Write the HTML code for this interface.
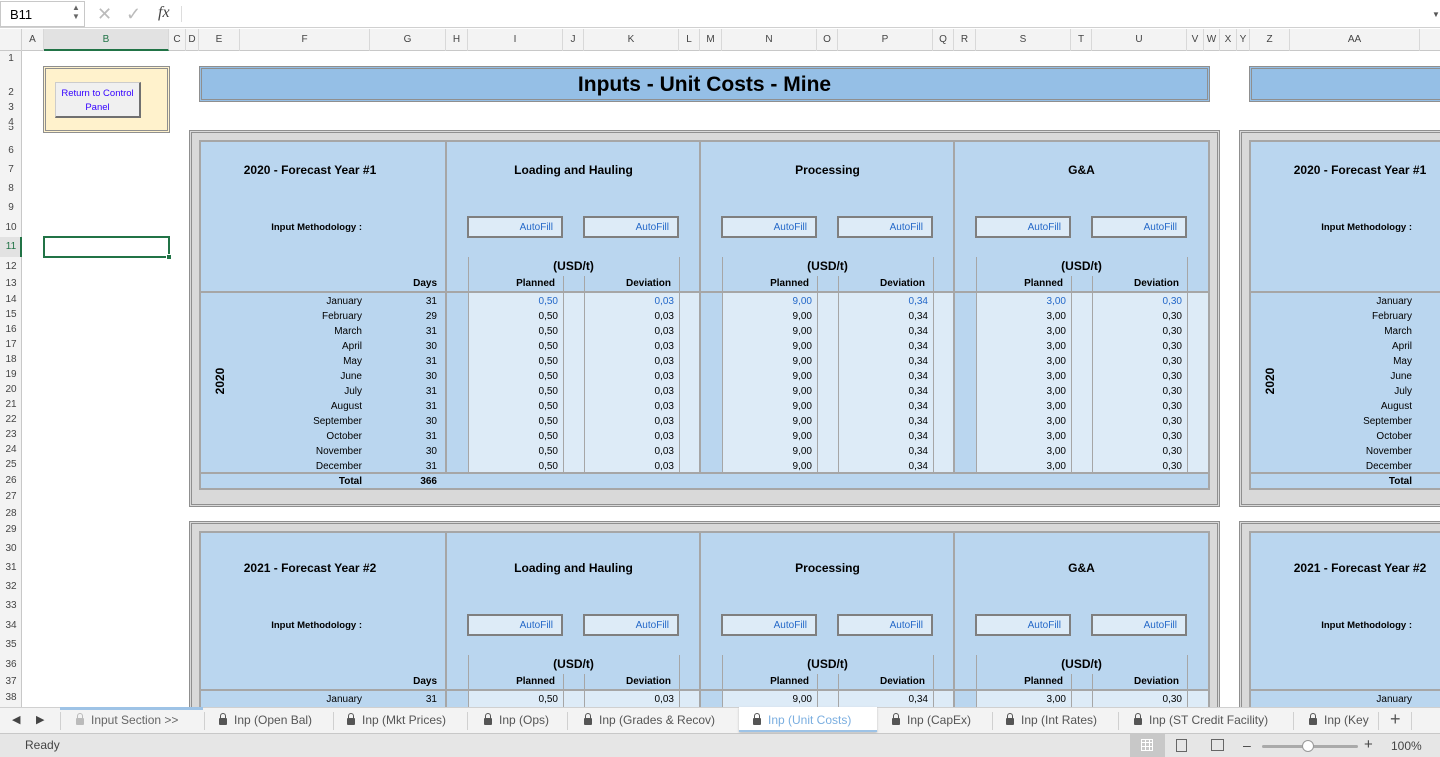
<!DOCTYPE html>
<html><head><meta charset="utf-8"><style>
*{margin:0;padding:0;box-sizing:border-box}
html{width:1440px;height:757px;overflow:hidden}
body{width:1440px;height:757px;overflow:hidden;background:#fff;font-family:"Liberation Sans",Arial,sans-serif;position:relative;color:#000}
.a{position:absolute}
.r{text-align:right}
.c{text-align:center}
.b{font-weight:bold}
.ch{position:absolute;top:29px;height:22px;line-height:22px;font-size:10px;color:#444;text-align:center;border-right:1px solid #d8d8d8}
.rh{position:absolute;left:0;width:22px;font-size:10px;color:#444;text-align:center;height:14px;line-height:14px}
.sec{position:absolute;left:0;width:1440px;height:510px;overflow:hidden}
.og{position:absolute;background:#d9d9d9;border:3px double #8f8f8f}
.ib{position:absolute;background:#bad6ef;border:2px solid #a6a6a6}
.vl{position:absolute;width:2px;background:#a6a6a6}
.hl{position:absolute;height:2px;background:#a6a6a6}
.tl{position:absolute;width:1px;background:#a6a6a6}
.lf{position:absolute;background:#ddebf7}
.af{position:absolute;width:96px;height:22px;border:2px solid #7f7f7f;background:#ddebf7;color:#2468c8;font-size:10px;line-height:20px;text-align:right;padding-right:8px}
.h1{position:absolute;font-size:12px;font-weight:bold;text-align:center;height:16px;line-height:16px}
.col{position:absolute;font-size:10px;line-height:15px;text-align:right}
.sm{position:absolute;font-size:10px;font-weight:bold;text-align:right;line-height:14px}
.tab{position:absolute;top:711px;font-size:12px;color:#555;height:18px;line-height:18px;white-space:nowrap}
.sep{position:absolute;top:712px;width:1px;height:18px;background:#d0d0d0}
.lk{display:inline-block;width:8px;height:7px;background:#555;border-radius:1px;margin-right:7px;position:relative;vertical-align:-1px}
.lk:before{content:"";position:absolute;left:1px;top:-5px;width:4px;height:5px;border:1.5px solid #555;border-bottom:none;border-radius:3px 3px 0 0}
</style></head><body>

<div class="a" style="left:0;top:0;width:1440px;height:28px;background:#fff;border-bottom:1px solid #d0d0d0"></div>
<div class="a" style="left:0;top:1px;width:85px;height:26px;border:1px solid #c8c8c8;background:#fff"></div>
<div class="a" style="left:10px;top:7px;font-size:13px">B11</div>
<div class="a" style="left:72px;top:3px;font-size:8px;color:#666;line-height:9px">▲<br>▼</div>
<div class="a" style="left:97px;top:4px;font-size:18px;color:#bbb">✕</div>
<div class="a" style="left:126px;top:4px;font-size:18px;color:#bbb">✓</div>
<div class="a" style="left:158px;top:4px;font-size:16px;font-style:italic;font-family:'Liberation Serif',serif;color:#444">fx</div>
<div class="a" style="left:181px;top:6px;width:1px;height:16px;background:#ddd"></div>
<div class="a" style="left:1432px;top:10px;font-size:8px;color:#555">▼</div>

<div class="a" style="left:0;top:29px;width:1440px;height:22px;background:#f3f3f3;border-bottom:1px solid #c8c8c8"></div>
<div class="a" style="left:0;top:29px;width:22px;height:22px;border-right:1px solid #d0d0d0"></div>
<div class="ch" style="left:22px;width:22px">A</div>
<div class="ch" style="left:44px;width:125px;background:#e2e2e2;border-bottom:2px solid #217346;color:#217346">B</div>
<div class="ch" style="left:169px;width:17px">C</div>
<div class="ch" style="left:186px;width:13px">D</div>
<div class="ch" style="left:199px;width:41px">E</div>
<div class="ch" style="left:240px;width:130px">F</div>
<div class="ch" style="left:370px;width:76px">G</div>
<div class="ch" style="left:446px;width:22px">H</div>
<div class="ch" style="left:468px;width:95px">I</div>
<div class="ch" style="left:563px;width:21px">J</div>
<div class="ch" style="left:584px;width:95px">K</div>
<div class="ch" style="left:679px;width:21px">L</div>
<div class="ch" style="left:700px;width:22px">M</div>
<div class="ch" style="left:722px;width:95px">N</div>
<div class="ch" style="left:817px;width:21px">O</div>
<div class="ch" style="left:838px;width:95px">P</div>
<div class="ch" style="left:933px;width:21px">Q</div>
<div class="ch" style="left:954px;width:22px">R</div>
<div class="ch" style="left:976px;width:95px">S</div>
<div class="ch" style="left:1071px;width:21px">T</div>
<div class="ch" style="left:1092px;width:95px">U</div>
<div class="ch" style="left:1187px;width:17px">V</div>
<div class="ch" style="left:1204px;width:16px">W</div>
<div class="ch" style="left:1220px;width:17px">X</div>
<div class="ch" style="left:1237px;width:13px">Y</div>
<div class="ch" style="left:1250px;width:40px">Z</div>
<div class="ch" style="left:1290px;width:130px">AA</div>

<div class="a" style="left:0;top:51px;width:22px;height:656px;background:#f3f3f3;border-right:1px solid #c8c8c8"></div>
<div class="a" style="left:0;top:237px;width:22px;height:20px;background:#e2e2e2;border-right:2px solid #217346"></div>
<div class="rh" style="top:52px">1</div>
<div class="rh" style="top:86px">2</div>
<div class="rh" style="top:101px">3</div>
<div class="rh" style="top:116px">4</div>
<div class="rh" style="top:126px;height:8px;overflow:hidden;line-height:4px">5</div>
<div class="rh" style="top:144px">6</div>
<div class="rh" style="top:163px">7</div>
<div class="rh" style="top:182px">8</div>
<div class="rh" style="top:201px">9</div>
<div class="rh" style="top:221px">10</div>
<div class="rh" style="top:240px;color:#217346">11</div>
<div class="rh" style="top:260px">12</div>
<div class="rh" style="top:277px">13</div>
<div class="rh" style="top:293px">14</div>
<div class="rh" style="top:308px">15</div>
<div class="rh" style="top:323px">16</div>
<div class="rh" style="top:338px">17</div>
<div class="rh" style="top:353px">18</div>
<div class="rh" style="top:368px">19</div>
<div class="rh" style="top:383px">20</div>
<div class="rh" style="top:398px">21</div>
<div class="rh" style="top:413px">22</div>
<div class="rh" style="top:428px">23</div>
<div class="rh" style="top:443px">24</div>
<div class="rh" style="top:458px">25</div>
<div class="rh" style="top:474px">26</div>
<div class="rh" style="top:490px">27</div>
<div class="rh" style="top:507px">28</div>
<div class="rh" style="top:523px">29</div>
<div class="rh" style="top:542px">30</div>
<div class="rh" style="top:561px">31</div>
<div class="rh" style="top:580px">32</div>
<div class="rh" style="top:599px">33</div>
<div class="rh" style="top:619px">34</div>
<div class="rh" style="top:638px">35</div>
<div class="rh" style="top:658px">36</div>
<div class="rh" style="top:675px">37</div>
<div class="rh" style="top:691px">38</div>

<div class="a" style="left:23px;top:52px;width:1417px;height:655px;overflow:hidden">
<div class="a" style="left:-23px;top:-52px;width:1440px;height:707px;overflow:hidden">

<div class="a" style="left:43px;top:66px;width:127px;height:67px;background:#fff2cc;border:3px double #8f8f8f"></div>
<div class="a" style="left:55px;top:82px;width:86px;height:36px;background:#f0f0f0;border:1px solid #ccc;border-right:2px solid #707070;border-bottom:2px solid #707070;color:#3300ff;font-size:9.5px;text-align:center;line-height:14px;padding-top:4px">Return to Control<br>Panel</div>

<div class="a" style="left:43px;top:236px;width:127px;height:22px;border:2px solid #217346"></div>
<div class="a" style="left:166px;top:254px;width:6px;height:6px;background:#217346;border:1px solid #fff"></div>

<div class="a" style="left:199px;top:66px;width:1011px;height:36px;background:#95bfe6;border:3px double #8f8f8f"></div>
<div class="a c b" style="left:199px;top:72px;width:1011px;font-size:21px;line-height:26px">Inputs - Unit Costs - Mine</div>
<div class="a" style="left:1249px;top:66px;width:220px;height:36px;background:#95bfe6;border:3px double #8f8f8f"></div>

<div class="sec" style="top:0">
<div class="og" style="left:189px;top:130px;width:1031px;height:377px"></div>
<div class="ib" style="left:199px;top:140px;width:1011px;height:350px"></div>
<div class="lf" style="left:468px;top:293px;width:232px;height:180px"></div>
<div class="lf" style="left:722px;top:293px;width:232px;height:180px"></div>
<div class="lf" style="left:976px;top:293px;width:232px;height:180px"></div>
<div class="vl" style="left:445px;top:141px;height:332px"></div>
<div class="vl" style="left:699px;top:141px;height:332px"></div>
<div class="vl" style="left:953px;top:141px;height:332px"></div>
<div class="hl" style="left:200px;top:291px;width:1008px"></div>
<div class="hl" style="left:200px;top:472px;width:1008px"></div>
<div class="tl" style="left:468px;top:257px;height:215px"></div><div class="tl" style="left:679px;top:257px;height:215px"></div>
<div class="tl" style="left:563px;top:276px;height:196px"></div><div class="tl" style="left:584px;top:276px;height:196px"></div>
<div class="tl" style="left:722px;top:257px;height:215px"></div><div class="tl" style="left:933px;top:257px;height:215px"></div>
<div class="tl" style="left:817px;top:276px;height:196px"></div><div class="tl" style="left:838px;top:276px;height:196px"></div>
<div class="tl" style="left:976px;top:257px;height:215px"></div><div class="tl" style="left:1187px;top:257px;height:215px"></div>
<div class="tl" style="left:1071px;top:276px;height:196px"></div><div class="tl" style="left:1092px;top:276px;height:196px"></div>

<div class="h1" style="left:200px;top:162px;width:220px">2020 - Forecast Year #1</div>
<div class="h1" style="left:448px;top:162px;width:251px">Loading and Hauling</div>
<div class="h1" style="left:702px;top:162px;width:251px">Processing</div>
<div class="h1" style="left:956px;top:162px;width:251px">G&amp;A</div>
<div class="sm" style="left:200px;top:221px;width:162px;font-size:9.5px">Input Methodology :</div>
<div class="af" style="left:467px;top:216px">AutoFill</div><div class="af" style="left:583px;top:216px">AutoFill</div>
<div class="af" style="left:721px;top:216px">AutoFill</div><div class="af" style="left:837px;top:216px">AutoFill</div>
<div class="af" style="left:975px;top:216px">AutoFill</div><div class="af" style="left:1091px;top:216px">AutoFill</div>
<div class="h1" style="left:468px;top:258px;width:211px">(USD/t)</div>
<div class="h1" style="left:722px;top:258px;width:211px">(USD/t)</div>
<div class="h1" style="left:976px;top:258px;width:211px">(USD/t)</div>
<div class="sm" style="left:380px;top:277px;width:57px">Days</div>
<div class="sm" style="left:468px;top:277px;width:87px">Planned</div><div class="sm" style="left:584px;top:277px;width:87px">Deviation</div>
<div class="sm" style="left:722px;top:277px;width:87px">Planned</div><div class="sm" style="left:838px;top:277px;width:87px">Deviation</div>
<div class="sm" style="left:976px;top:277px;width:87px">Planned</div><div class="sm" style="left:1092px;top:277px;width:87px">Deviation</div>
<div class="a b" style="left:200px;top:374px;width:40px;font-size:12px;transform:rotate(-90deg);text-align:center">2020</div>
<div class="col" style="left:240px;top:294px;width:122px">January<br>February<br>March<br>April<br>May<br>June<br>July<br>August<br>September<br>October<br>November<br>December</div>
<div class="col" style="left:380px;top:294px;width:57px">31<br>29<br>31<br>30<br>31<br>30<br>31<br>31<br>30<br>31<br>30<br>31</div>
<div class="col" style="left:468px;top:294px;width:90px"><span style="color:#2468c8">0,50</span><br>0,50<br>0,50<br>0,50<br>0,50<br>0,50<br>0,50<br>0,50<br>0,50<br>0,50<br>0,50<br>0,50</div>
<div class="col" style="left:584px;top:294px;width:90px"><span style="color:#2468c8">0,03</span><br>0,03<br>0,03<br>0,03<br>0,03<br>0,03<br>0,03<br>0,03<br>0,03<br>0,03<br>0,03<br>0,03</div>
<div class="col" style="left:722px;top:294px;width:90px"><span style="color:#2468c8">9,00</span><br>9,00<br>9,00<br>9,00<br>9,00<br>9,00<br>9,00<br>9,00<br>9,00<br>9,00<br>9,00<br>9,00</div>
<div class="col" style="left:838px;top:294px;width:90px"><span style="color:#2468c8">0,34</span><br>0,34<br>0,34<br>0,34<br>0,34<br>0,34<br>0,34<br>0,34<br>0,34<br>0,34<br>0,34<br>0,34</div>
<div class="col" style="left:976px;top:294px;width:90px"><span style="color:#2468c8">3,00</span><br>3,00<br>3,00<br>3,00<br>3,00<br>3,00<br>3,00<br>3,00<br>3,00<br>3,00<br>3,00<br>3,00</div>
<div class="col" style="left:1092px;top:294px;width:90px"><span style="color:#2468c8">0,30</span><br>0,30<br>0,30<br>0,30<br>0,30<br>0,30<br>0,30<br>0,30<br>0,30<br>0,30<br>0,30<br>0,30</div>
<div class="sm" style="left:240px;top:475px;width:122px">Total</div>
<div class="sm" style="left:380px;top:475px;width:57px">366</div>

<div class="og" style="left:1239px;top:130px;width:260px;height:377px"></div>
<div class="ib" style="left:1249px;top:140px;width:240px;height:350px"></div>
<div class="hl" style="left:1250px;top:291px;width:200px"></div>
<div class="hl" style="left:1250px;top:472px;width:200px"></div>
<div class="h1" style="left:1250px;top:162px;width:220px">2020 - Forecast Year #1</div>
<div class="sm" style="left:1250px;top:221px;width:162px;font-size:9.5px">Input Methodology :</div>
<div class="a b" style="left:1250px;top:374px;width:40px;font-size:12px;transform:rotate(-90deg);text-align:center">2020</div>
<div class="col" style="left:1290px;top:294px;width:122px">January<br>February<br>March<br>April<br>May<br>June<br>July<br>August<br>September<br>October<br>November<br>December</div>
<div class="sm" style="left:1290px;top:475px;width:122px">Total</div>
</div>

<div class="sec" style="top:398px;height:309px">
<div class="og" style="left:189px;top:123px;width:1031px;height:384px"></div>
<div class="ib" style="left:199px;top:133px;width:1011px;height:357px"></div>
<div class="lf" style="left:468px;top:293px;width:232px;height:180px"></div>
<div class="lf" style="left:722px;top:293px;width:232px;height:180px"></div>
<div class="lf" style="left:976px;top:293px;width:232px;height:180px"></div>
<div class="vl" style="left:445px;top:134px;height:339px"></div>
<div class="vl" style="left:699px;top:134px;height:339px"></div>
<div class="vl" style="left:953px;top:134px;height:339px"></div>
<div class="hl" style="left:200px;top:291px;width:1008px"></div>
<div class="tl" style="left:468px;top:257px;height:215px"></div><div class="tl" style="left:679px;top:257px;height:215px"></div>
<div class="tl" style="left:563px;top:276px;height:196px"></div><div class="tl" style="left:584px;top:276px;height:196px"></div>
<div class="tl" style="left:722px;top:257px;height:215px"></div><div class="tl" style="left:933px;top:257px;height:215px"></div>
<div class="tl" style="left:817px;top:276px;height:196px"></div><div class="tl" style="left:838px;top:276px;height:196px"></div>
<div class="tl" style="left:976px;top:257px;height:215px"></div><div class="tl" style="left:1187px;top:257px;height:215px"></div>
<div class="tl" style="left:1071px;top:276px;height:196px"></div><div class="tl" style="left:1092px;top:276px;height:196px"></div>
<div class="h1" style="left:200px;top:162px;width:220px">2021 - Forecast Year #2</div>
<div class="h1" style="left:448px;top:162px;width:251px">Loading and Hauling</div>
<div class="h1" style="left:702px;top:162px;width:251px">Processing</div>
<div class="h1" style="left:956px;top:162px;width:251px">G&amp;A</div>
<div class="sm" style="left:200px;top:221px;width:162px;font-size:9.5px">Input Methodology :</div>
<div class="af" style="left:467px;top:216px">AutoFill</div><div class="af" style="left:583px;top:216px">AutoFill</div>
<div class="af" style="left:721px;top:216px">AutoFill</div><div class="af" style="left:837px;top:216px">AutoFill</div>
<div class="af" style="left:975px;top:216px">AutoFill</div><div class="af" style="left:1091px;top:216px">AutoFill</div>
<div class="h1" style="left:468px;top:258px;width:211px">(USD/t)</div>
<div class="h1" style="left:722px;top:258px;width:211px">(USD/t)</div>
<div class="h1" style="left:976px;top:258px;width:211px">(USD/t)</div>
<div class="sm" style="left:380px;top:277px;width:57px">Days</div>
<div class="sm" style="left:468px;top:277px;width:87px">Planned</div><div class="sm" style="left:584px;top:277px;width:87px">Deviation</div>
<div class="sm" style="left:722px;top:277px;width:87px">Planned</div><div class="sm" style="left:838px;top:277px;width:87px">Deviation</div>
<div class="sm" style="left:976px;top:277px;width:87px">Planned</div><div class="sm" style="left:1092px;top:277px;width:87px">Deviation</div>
<div class="col" style="left:240px;top:294px;width:122px">January</div>
<div class="col" style="left:380px;top:294px;width:57px">31</div>
<div class="col" style="left:468px;top:294px;width:90px">0,50</div>
<div class="col" style="left:584px;top:294px;width:90px">0,03</div>
<div class="col" style="left:722px;top:294px;width:90px">9,00</div>
<div class="col" style="left:838px;top:294px;width:90px">0,34</div>
<div class="col" style="left:976px;top:294px;width:90px">3,00</div>
<div class="col" style="left:1092px;top:294px;width:90px">0,30</div>
<div class="og" style="left:1239px;top:123px;width:260px;height:384px"></div>
<div class="ib" style="left:1249px;top:133px;width:240px;height:357px"></div>
<div class="hl" style="left:1250px;top:291px;width:200px"></div>
<div class="h1" style="left:1250px;top:162px;width:220px">2021 - Forecast Year #2</div>
<div class="sm" style="left:1250px;top:221px;width:162px;font-size:9.5px">Input Methodology :</div>
<div class="col" style="left:1290px;top:294px;width:122px">January</div>
</div>

</div></div>

<div class="a" style="left:0;top:707px;width:1440px;height:27px;background:#f3f3f3;border-top:1px solid #d0d0d0;border-bottom:1px solid #c8c8c8"></div>
<div class="a" style="left:12px;top:713px;font-size:11px;color:#444">◀</div>
<div class="a" style="left:36px;top:713px;font-size:11px;color:#444">▶</div>
<div class="sep" style="left:60px"></div>
<div class="a" style="left:60px;top:707px;width:143px;height:3px;background:#9ec3e6"></div>
<div class="tab" style="left:76px;color:#666"><span class="lk" style="opacity:.35"></span>Input Section &gt;&gt;</div>
<div class="sep" style="left:204px"></div>
<div class="tab" style="left:219px"><span class="lk"></span>Inp (Open Bal)</div>
<div class="sep" style="left:333px"></div>
<div class="tab" style="left:347px"><span class="lk"></span>Inp (Mkt Prices)</div>
<div class="sep" style="left:467px"></div>
<div class="tab" style="left:484px"><span class="lk"></span>Inp (Ops)</div>
<div class="sep" style="left:567px"></div>
<div class="tab" style="left:584px"><span class="lk"></span>Inp (Grades &amp; Recov)</div>
<div class="a" style="left:739px;top:707px;width:138px;height:25px;background:#fff;border-bottom:2px solid #9ec3e6;box-shadow:0 1px 2px #bbb"></div>
<div class="tab" style="left:753px;color:#7aaee0"><span class="lk"></span>Inp (Unit Costs)</div>
<div class="tab" style="left:892px"><span class="lk"></span>Inp (CapEx)</div>
<div class="sep" style="left:992px"></div>
<div class="tab" style="left:1006px"><span class="lk"></span>Inp (Int Rates)</div>
<div class="sep" style="left:1118px"></div>
<div class="tab" style="left:1134px"><span class="lk"></span>Inp (ST Credit Facility)</div>
<div class="sep" style="left:1293px"></div>
<div class="tab" style="left:1309px;width:65px;overflow:hidden"><span class="lk"></span>Inp (Key</div>
<div class="sep" style="left:1378px"></div>
<div class="a" style="left:1390px;top:709px;font-size:18px;color:#555">+</div>
<div class="sep" style="left:1411px"></div>

<div class="a" style="left:0;top:734px;width:1440px;height:23px;background:#e6e6e6"></div>
<div class="a" style="left:25px;top:738px;font-size:12px;color:#444">Ready</div>
<div class="a" style="left:1130px;top:734px;width:35px;height:23px;background:#c8c8c8"></div>
<div class="a" style="left:1141px;top:739px;width:12px;height:12px;border:1px solid #fff;background:repeating-linear-gradient(90deg,transparent 0 3px,#fff 3px 4px),repeating-linear-gradient(0deg,transparent 0 3px,#fff 3px 4px)"></div>
<div class="a" style="left:1176px;top:739px;width:11px;height:13px;border:1px solid #666"></div>
<div class="a" style="left:1211px;top:739px;width:13px;height:12px;border:1px solid #666"></div>
<div class="a" style="left:1243px;top:737px;font-size:14px;color:#444">–</div>
<div class="a" style="left:1262px;top:745px;width:96px;height:3px;background:#aaa;border-radius:2px"></div>
<div class="a" style="left:1302px;top:740px;width:12px;height:12px;background:#fff;border:1px solid #999;border-radius:50%"></div>
<div class="a" style="left:1364px;top:736px;font-size:15px;color:#444">+</div>
<div class="a" style="left:1391px;top:739px;font-size:12px;color:#444">100%</div>
</body></html>
